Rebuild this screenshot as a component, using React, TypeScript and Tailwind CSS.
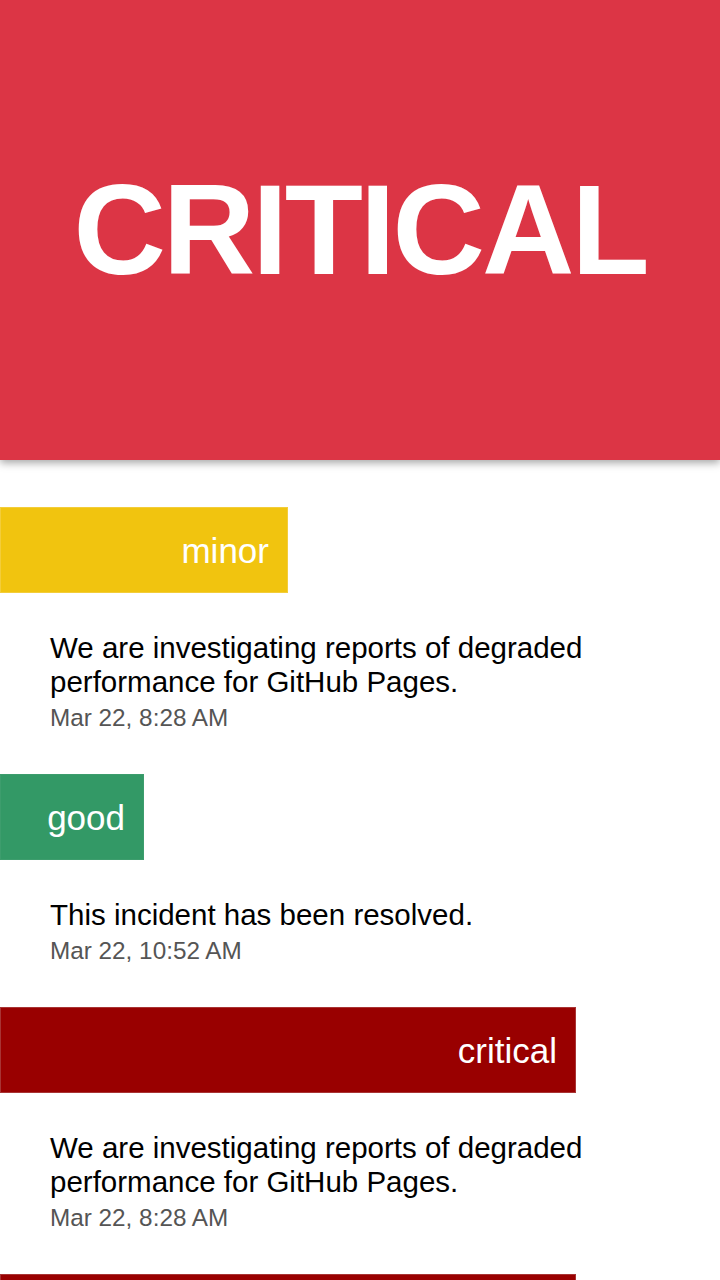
import React from 'react';

interface Incident {
  status: 'minor' | 'good' | 'critical';
  message?: string;
  time?: string;
}

const incidents: Incident[] = [
  { status: 'minor', message: 'We are investigating reports of degraded performance for GitHub Pages.', time: 'Mar 22, 8:28 AM' },
  { status: 'good', message: 'This incident has been resolved.', time: 'Mar 22, 10:52 AM' },
  { status: 'critical', message: 'We are investigating reports of degraded performance for GitHub Pages.', time: 'Mar 22, 8:28 AM' },
  { status: 'critical' },
];

const barStyles: Record<Incident['status'], string> = {
  minor: 'w-[40%] bg-[#f1c40f] border-[#f3cd3a]',
  good: 'w-[20%] bg-[#339966] border-[#3d9d6d]',
  critical: 'w-[80%] bg-[#990000] border-[#a83434]',
};

const App: React.FC = () => {
  return (
    <div className="h-[1280px] overflow-hidden bg-white font-['Liberation_Sans',Arial,sans-serif]">
      {/* Current status */}
      <header className="relative z-10 flex h-[460px] items-center justify-center bg-[#dc3545] shadow-[0_3px_8px_rgba(0,0,0,0.35)]">
        <h1 className="text-[128px] leading-none font-bold tracking-[-3px] text-white">CRITICAL</h1>
      </header>

      {/* Incident history */}
      <main className="pt-[47px]">
        {incidents.map((incident, i) => (
          <section key={i}>
            <div className={`flex h-[86px] items-center justify-end border pr-[18px] ${barStyles[incident.status]}`}>
              {incident.message && (
                <span className="text-[35px] leading-none text-white">{incident.status}</span>
              )}
            </div>
            {incident.message && (
              <div className="pt-[38px] pr-[40px] pb-[42px] pl-[50px]">
                <p className="max-w-[580px] text-[29.5px] leading-[34px] text-black">{incident.message}</p>
                <p className="mt-[5px] text-[24.3px] leading-[28px] text-[#555555]">{incident.time}</p>
              </div>
            )}
          </section>
        ))}
      </main>
    </div>
  );
};

export default App;
